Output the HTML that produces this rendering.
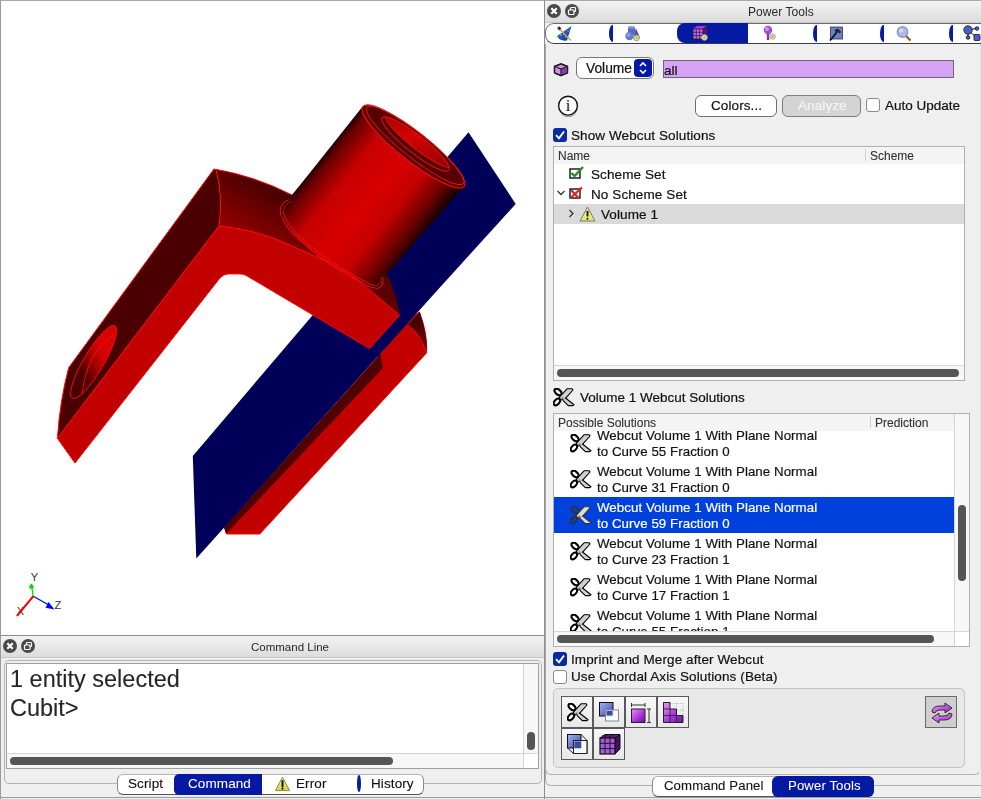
<!DOCTYPE html>
<html><head><meta charset="utf-8">
<style>
*{box-sizing:border-box;margin:0;padding:0}
html,body{width:981px;height:799px;overflow:hidden;background:#efefef;font-family:"Liberation Sans",sans-serif;color:#111}
.a{position:absolute}
.t{position:absolute;white-space:nowrap;font-size:13.5px;letter-spacing:0.1px;line-height:16px;-webkit-text-stroke:0.2px currentColor;will-change:transform}
.titlebar{position:absolute;background:linear-gradient(#f3f3f3,#dcdcdc);border-bottom:1px solid #c6c6c6}
.btnc{position:absolute;width:14px;height:14px;border-radius:50%;background:#4a4a4a}
.chk{position:absolute;width:14px;height:14px;border-radius:3px;background:#0a2ba0;}
.chk svg{position:absolute;left:0;top:0}
.unchk{position:absolute;width:14px;height:14px;border-radius:3px;background:#fff;border:1px solid #8a8a8a}
.tool{position:absolute;width:32px;height:32px;border:1px solid #5a5a5a;background:linear-gradient(#f7f7f7,#e8e8e8)}
.sep{position:absolute;width:3.6px;height:17px;background:#0a1c9c;border-radius:100% 0 0 100% / 50% 0 0 50%}
</style></head><body>

<!-- ============ VIEWPORT ============ -->
<div class="a" style="left:0;top:0;width:545px;height:636px;background:#fff;border-top:1px solid #a8a8a8;border-left:1px solid #9a9a9a;border-bottom:1px solid #8e8e8e"></div>
<svg class="a" style="left:0;top:0" width="545" height="636" viewBox="0 0 545 636" id="model">
<defs>
 <linearGradient id="cyl" gradientUnits="userSpaceOnUse" x1="362" y1="104.7" x2="464" y2="185.3">
  <stop offset="0" stop-color="#1a0000"/>
  <stop offset="0.07" stop-color="#6a0000"/>
  <stop offset="0.25" stop-color="#c60000"/>
  <stop offset="0.5" stop-color="#d80000"/>
  <stop offset="0.7" stop-color="#c40000"/>
  <stop offset="0.88" stop-color="#6a0000"/>
  <stop offset="1" stop-color="#0e0000"/>
 </linearGradient>
 <linearGradient id="corner" gradientUnits="userSpaceOnUse" x1="262" y1="176" x2="232" y2="226">
  <stop offset="0" stop-color="#420000"/>
  <stop offset="1" stop-color="#8e0000"/>
 </linearGradient>
 <linearGradient id="hole" gradientUnits="userSpaceOnUse" x1="385" y1="118" x2="445" y2="168">
  <stop offset="0" stop-color="#9a0000"/>
  <stop offset="0.45" stop-color="#d40000"/>
  <stop offset="1" stop-color="#900000"/>
 </linearGradient>
 <linearGradient id="rcorner" gradientUnits="userSpaceOnUse" x1="408" y1="320" x2="426" y2="350">
  <stop offset="0" stop-color="#3a0000"/>
  <stop offset="1" stop-color="#7a0000"/>
 </linearGradient>
</defs>
<!-- right arm (behind plane) -->
<path d="M419.5,312 Q428,335 426.5,353 L259.8,534 L226.8,534 L224.5,528 L377,358 L405,322 Z" fill="#c30000" stroke="#ff0000" stroke-width="1"/>
<path d="M419.5,312 Q428,335 426.5,353 Q420,333 408,325 Z" fill="url(#rcorner)"/>
<path d="M408,325 Q420,333 426.5,353" fill="none" stroke="#ff1010" stroke-width="0.8"/>
<path d="M377,358 L380,352 L383,368 L226,534 L224,527 Z" fill="#500000"/>
<!-- blue plane -->
<path d="M468.5,132.3 L515.7,204 L436.7,290.9 L196.3,558.6 L192.8,455.9 Z" fill="#000058"/>
<!-- left body: corner / base top face -->
<path d="M214,169 Q255,176 292,195 L330,150 L400,200 L387,274.4 Q396,292 399.6,315.2 L351,274.5 L317,257 L278,240 Q250,229 219,226 Q223,195 216,170 Z" fill="url(#corner)"/>
<path d="M387,274.4 Q396,292 399.6,315.2 L372,290 Z" fill="#5a0000"/>
<!-- left arm dark face -->
<path d="M214,169 L68.7,367.7 Q60,400 57.4,438.3 L219,226 Q223,195 216,170 Z" fill="#4b0000"/>
<!-- hole on arm -->
<linearGradient id="armhole" gradientUnits="userSpaceOnUse" x1="80" y1="355" x2="105" y2="370">
  <stop offset="0" stop-color="#4a0000"/><stop offset="0.6" stop-color="#b00000"/><stop offset="1" stop-color="#d80000"/>
</linearGradient>
<ellipse cx="93.6" cy="362" rx="42" ry="10" transform="rotate(-59.5 93.6 362)" fill="url(#armhole)" stroke="#ff1010" stroke-width="0.8"/>
<path d="M82,394 Q87,352 113.5,335" fill="none" stroke="#ff1010" stroke-width="0.8"/>
<!-- cylinder body -->
<path d="M363,106 L289,199 C276,210 280,225 296,237 C310,250 330,266 341.6,271.3 C355,279 370,288 378,288.5 L387,274.4 L464,186.5 Z" fill="url(#cyl)"/>
<!-- cylinder top -->
<ellipse cx="413.5" cy="146.5" rx="64.5" ry="14.5" transform="rotate(38.3 413.5 146.5)" fill="#560000" stroke="#ff1010" stroke-width="1"/>
<ellipse cx="415.2" cy="145.4" rx="61.5" ry="12.5" transform="rotate(38.3 415.2 145.4)" fill="none" stroke="#ff1010" stroke-width="0.8"/>
<clipPath id="holeclip"><ellipse cx="415.5" cy="144" rx="42.5" ry="9" transform="rotate(38.3 415.5 144)"/></clipPath>
<ellipse cx="415.5" cy="144" rx="42.5" ry="9" transform="rotate(38.3 415.5 144)" fill="#520000"/>
<g clip-path="url(#holeclip)"><ellipse cx="418.5" cy="140.2" rx="42.5" ry="9" transform="rotate(38.3 418.5 140.2)" fill="url(#hole)" stroke="#ff1010" stroke-width="0.8"/></g>
<ellipse cx="415.5" cy="144" rx="42.5" ry="9" transform="rotate(38.3 415.5 144)" fill="none" stroke="#ff1010" stroke-width="0.9"/>
<!-- U bright face -->
<path d="M75,463 L57.4,438.3 L219,226 Q250,229 278,240 L317,257 L351,274.5 L399.6,315.2 L369.5,348.5 L246.4,275.6 Q244,273.9 240,273.9 L228,273.9 Q223.5,274 219.5,278.5 Z" fill="#c30000" stroke="#ff0000" stroke-width="1" stroke-linejoin="round"/>
<!-- base ring -->
<path d="M289.3,199.6 C280,203 278,212 282.4,217.5 C286,226 290,231 296.2,236.8 L318.2,256.1 L341.6,271.3 L363.7,283.7 Q372,288 377.4,288.5 Q384,287 383,276.8" fill="none" stroke="#ff1010" stroke-width="0.9"/>
<path d="M291.5,201 C283.5,205 282,212 285,217 C289,225 293,230 298,235 L320,254 L343,269 L364,281 Q371,285.5 377,286 Q381.5,284 381.5,277.5" fill="none" stroke="#ff1010" stroke-width="0.8"/>
<!-- outer silhouette edges -->
<path d="M57.4,438.3 Q60,400 68.7,367.7 L214,169 Q255,176 292,195" fill="none" stroke="#ff0000" stroke-width="1"/>
<path d="M219,226 Q223,195 216,170" fill="none" stroke="#ff1010" stroke-width="0.8"/>
</svg>


<!-- axis triad -->
<svg class="a" style="left:0;top:560px" width="80" height="70" viewBox="0 560 80 70">
 <path d="M33.2,596.3 L31.8,587" stroke="#00dd00" stroke-width="1.3"/>
 <path d="M31.2,583.5 Q28.5,586.5 29.5,588.5 L33.5,588.5 Q34.5,586 31.2,583.5 Z" fill="#00dd00"/>
 <path d="M33.2,596.3 L48,604.5" stroke="#0000ff" stroke-width="1.3"/>
 <path d="M54.5,609.5 L45.5,607.8 L48.5,602 Z" fill="#0000ff"/>
 <path d="M33.2,596.3 L17,615.8" stroke="#ff0000" stroke-width="1.8"/>
 <text x="30.8" y="581" font-family="Liberation Sans" font-size="11" fill="#333">Y</text>
 <text x="54.5" y="608.8" font-family="Liberation Sans" font-size="11" fill="#333">Z</text>
 <text x="16.8" y="615" font-family="Liberation Sans" font-size="11" fill="#333">X</text>
 <path d="M33.2,596.3 L17,615.8" stroke="#ff0000" stroke-width="1.6" opacity="0.85"/>
</svg>

<!-- ============ COMMAND LINE DOCK ============ -->
<div class="titlebar" style="left:1px;top:636px;width:543px;height:22px"></div>
<div class="btnc" style="left:3px;top:639px"><svg width="14" height="14" style="position:absolute;left:0;top:0"><path d="M4.3 4.3 L9.7 9.7 M9.7 4.3 L4.3 9.7" stroke="#fff" stroke-width="2.2"/></svg></div>
<div class="btnc" style="left:21px;top:639px"><svg width="14" height="14" style="position:absolute;left:0;top:0"><rect x="5.5" y="3.5" width="5" height="4" rx="0.8" fill="none" stroke="#fff" stroke-width="1.2"/><rect x="3.5" y="6" width="5.5" height="4.5" rx="0.8" fill="#4a4a4a" stroke="#fff" stroke-width="1.2"/></svg></div>
<div class="t" style="left:251px;top:638.6px;font-size:11.5px;letter-spacing:0;-webkit-text-stroke:0;color:#2a2a2a">Command Line</div>
<div class="a" style="left:0;top:636px;width:1px;height:163px;background:#9a9a9a"></div>
<!-- frame -->
<div class="a" style="left:4px;top:660px;width:538px;height:124px;border:1px solid #b4b4b4;border-radius:5px;background:#efefef"></div>
<div class="a" style="left:6px;top:663px;width:533px;height:106px;border:1px solid #a0a0a0;background:#fff"></div>
<div class="t" style="left:9.6px;top:665px;font-size:23.5px;line-height:29px;letter-spacing:0;color:#262626;-webkit-text-stroke:0.1px #262626">1 entity selected<br>Cubit&gt;</div>
<!-- scroll areas -->
<div class="a" style="left:523px;top:664px;width:15px;height:90px;background:#f7f7f7;border-left:1px solid #d6d6d6"></div>
<div class="a" style="left:527px;top:732px;width:8px;height:18px;border-radius:4px;background:#555"></div>
<div class="a" style="left:7px;top:753px;width:531px;height:15px;background:#f7f7f7;border-top:1px solid #d6d6d6"></div>
<div class="a" style="left:523px;top:754px;width:15px;height:14px;background:#fff;border-left:1px solid #d6d6d6"></div>
<div class="a" style="left:10px;top:757px;width:383px;height:8px;border-radius:4px;background:#555"></div>
<!-- bottom tabs -->
<div class="a" style="left:1px;top:797px;width:544px;height:1px;background:#9a9a9a"></div>
<div class="a" style="left:117px;top:774px;width:307px;height:21px;border:1px solid #8a8a8a;border-top-color:#b4b4b4;border-bottom-color:#555;border-radius:6px;background:#fff"></div>
<div class="a" style="left:174px;top:774px;width:88px;height:21px;background:#0519a2;border-radius:5px 0 0 5px"></div>
<div class="t" style="left:128px;top:776px;-webkit-text-stroke:0.12px currentColor">Script</div>
<div class="t" style="left:188px;top:776px;color:#fff;-webkit-text-stroke:0.05px currentColor">Command</div>
<svg class="a" style="left:274px;top:776px" width="17" height="16" viewBox="0 0 17 16">
 <defs><linearGradient id="wy" x1="0" y1="0" x2="0" y2="1"><stop offset="0" stop-color="#fbfb90"/><stop offset="1" stop-color="#d8d040"/></linearGradient></defs>
 <path d="M8.5 1.2 L15.6 14.6 L1.4 14.6 Z" fill="url(#wy)" stroke="#8a8a40" stroke-width="1" stroke-linejoin="round"/>
 <path d="M8.5 5 L8.5 10.3" stroke="#111" stroke-width="2" stroke-linecap="round"/><circle cx="8.5" cy="12.6" r="1.1" fill="#111"/>
</svg>
<div class="t" style="left:296px;top:776px;-webkit-text-stroke:0.12px currentColor">Error</div>
<div class="sep" style="left:357px;top:775px;border-radius:50%"></div>
<div class="t" style="left:371px;top:776px;-webkit-text-stroke:0.12px currentColor">History</div>

<!-- divider -->
<div class="a" style="left:544px;top:0;width:1px;height:799px;background:#8e8e8e"></div>

<!-- ============ POWER TOOLS DOCK ============ -->
<div class="a" style="left:545px;top:0;width:436px;height:1px;background:#a8a8a8"></div>
<div class="titlebar" style="left:545px;top:1px;width:436px;height:22px"></div>
<div class="btnc" style="left:547px;top:4px"><svg width="14" height="14" style="position:absolute;left:0;top:0"><path d="M4.3 4.3 L9.7 9.7 M9.7 4.3 L4.3 9.7" stroke="#fff" stroke-width="2.2"/></svg></div>
<div class="btnc" style="left:565px;top:4px"><svg width="14" height="14" style="position:absolute;left:0;top:0"><rect x="5.5" y="3.5" width="5" height="4" rx="0.8" fill="none" stroke="#fff" stroke-width="1.2"/><rect x="3.5" y="6" width="5.5" height="4.5" rx="0.8" fill="#4a4a4a" stroke="#fff" stroke-width="1.2"/></svg></div>
<div class="t" style="left:748px;top:4px;font-size:12px;letter-spacing:0.05px;-webkit-text-stroke:0;color:#2a2a2a">Power Tools</div>
<!-- tab bar -->
<div class="a" style="left:545px;top:23px;width:445px;height:21px;border:1px solid #6e6e6e;border-bottom-color:#3c3c3c;border-radius:9px 0 0 9px;background:#fff"></div>
<div class="a" style="left:677px;top:23px;width:71px;height:20px;background:#0519a2;border-radius:8px 0 0 8px"></div>
<div class="sep" style="left:609px;top:25px"></div>
<div class="sep" style="left:813px;top:25px"></div>
<div class="sep" style="left:880px;top:25px"></div>
<div class="sep" style="left:949px;top:25px"></div>



<!-- tab icons -->
<svg class="a" style="left:556px;top:25px" width="17" height="17" viewBox="0 0 17 17">
 <defs><linearGradient id="hat" x1="0" y1="0" x2="1" y2="1"><stop offset="0" stop-color="#3a8ae8"/><stop offset="1" stop-color="#0a2a90"/></linearGradient></defs>
 <path d="M15.5 1 L1 11 Q3.5 16.5 11 15.5 Z" fill="url(#hat)"/>
 <circle cx="5" cy="10" r="0.7" fill="#f0e040"/><circle cx="8" cy="9" r="0.7" fill="#f0e040"/><circle cx="10" cy="12" r="0.7" fill="#f0e040"/><circle cx="12" cy="6" r="0.6" fill="#f0e040"/>
 <path d="M2 2.5 L15 15.5" stroke="#c8a060" stroke-width="1.5"/>
 <path d="M1 1 L4 2 L2.5 4 Z" fill="#e8c860"/>
 <rect x="1.8" y="1.8" width="3" height="3" fill="#3a3020" transform="rotate(45 3.3 3.3)"/>
</svg>
<svg class="a" style="left:624px;top:25px" width="17" height="17" viewBox="0 0 17 17">
 <path d="M12 3 L16 13 L9 13 Z" fill="#4a58b0"/>
 <rect x="4" y="2" width="7" height="8" fill="#5a68c0"/><ellipse cx="7.5" cy="2.2" rx="3.5" ry="1.3" fill="#8a98e0"/>
 <circle cx="5.5" cy="11" r="4.2" fill="#6a78cc"/><circle cx="4.5" cy="10" r="2" fill="#9aa8ea" opacity="0.7"/>
 <circle cx="12.5" cy="13" r="2.8" fill="#e8e080" stroke="#999" stroke-width="1"/><circle cx="12.5" cy="13" r="1" fill="#aaa"/>
</svg>
<svg class="a" style="left:691px;top:25px" width="18" height="16" viewBox="0 0 18 16">
 <path d="M2 4 L6 1 L16 1 L12 4 Z" fill="#c030d0"/>
 <path d="M12 4 L16 1 L16 11 L12 14 Z" fill="#5a1070"/>
 <rect x="2" y="4" width="10" height="10" fill="#b070e0"/>
 <path d="M2 7.3 H12 M2 10.6 H12 M5.3 4 V14 M8.6 4 V14" stroke="#4a1060" stroke-width="0.8"/>
 <path d="M2 4 H12 V14 H2 Z M12 4 L16 1" fill="none" stroke="#222" stroke-width="0.8"/>
 <circle cx="13.5" cy="12.5" r="2.8" fill="#e8e080" stroke="#aaa" stroke-width="1"/><circle cx="13.5" cy="12.5" r="1" fill="#999"/>
</svg>
<svg class="a" style="left:762px;top:25px" width="15" height="16" viewBox="0 0 15 16">
 <circle cx="6" cy="5" r="4.3" fill="#a050d0"/><circle cx="5" cy="4" r="2" fill="#d8a8f0" opacity="0.8"/>
 <rect x="4.8" y="8" width="2.4" height="7" fill="#8a30c0"/>
 <circle cx="10.5" cy="11.5" r="2.8" fill="#e8e080" stroke="#aaa" stroke-width="1"/><circle cx="10.5" cy="11.5" r="1" fill="#999"/>
</svg>
<svg class="a" style="left:828px;top:26px" width="16" height="16" viewBox="0 0 16 16">
 <rect x="2.5" y="1" width="12" height="12" fill="#6a80c8" stroke="#333" stroke-width="0.8"/>
 <path d="M2 14.5 L9 6" stroke="#111" stroke-width="1.8"/>
 <path d="M6.5 4 L10 2.5 L13 6 L11.5 7.5 L9.5 5.5 L8 6.5 Z" fill="#222"/>
</svg>
<svg class="a" style="left:895px;top:25px" width="17" height="17" viewBox="0 0 17 17">
 <path d="M11 11 L15.5 15.5" stroke="#8a5a20" stroke-width="2.2"/>
 <circle cx="7.5" cy="7" r="5.3" fill="#b0b8ea" stroke="#8890b0" stroke-width="1.2"/>
 <circle cx="6.2" cy="5.5" r="2" fill="#e0e4ff" opacity="0.8"/>
</svg>
<svg class="a" style="left:962px;top:24px" width="19" height="18" viewBox="0 0 19 18">
 <path d="M6 6 L14 4.5 M6 6 L14 13 M6 6 L6 13" stroke="#111" stroke-width="1"/>
 <circle cx="6" cy="6" r="4.2" fill="#4a60c8" stroke="#111" stroke-width="0.8"/>
 <circle cx="15" cy="4.5" r="1.8" fill="#4a60c8" stroke="#111" stroke-width="0.8"/>
 <circle cx="6" cy="13.5" r="1.8" fill="#4a60c8" stroke="#111" stroke-width="0.8"/>
 <rect x="12" y="10.5" width="6" height="6" rx="1" fill="#4a60c8" stroke="#111" stroke-width="0.8"/>
</svg>

<!-- volume row -->
<svg class="a" style="left:553px;top:62px" width="16" height="15" viewBox="0 0 16 15">
 <path d="M8 1.8 L14.5 4.3 L14.5 10.8 L8 13.6 L1.5 10.8 L1.5 4.3 Z" fill="#d090f0" stroke="#222" stroke-width="1.3" stroke-linejoin="round"/>
 <path d="M8 7 L14.5 4.3 L14.5 10.8 L8 13.6 Z" fill="#8a40b8"/>
 <path d="M1.5 4.3 L8 7 L14.5 4.3 M8 7 L8 13.6" fill="none" stroke="#222" stroke-width="1.2"/>
 <path d="M8 1.8 L14.5 4.3 L14.5 10.8 L8 13.6 L1.5 10.8 L1.5 4.3 Z" fill="none" stroke="#222" stroke-width="1.3" stroke-linejoin="round"/>
</svg>
<div class="a" style="left:576px;top:57px;width:78px;height:22px;border:1px solid #777;border-radius:6px;background:#fff"></div>
<div class="t" style="left:585.5px;top:61px;font-size:13.8px;letter-spacing:0">Volume</div>
<div class="a" style="left:634px;top:59px;width:18px;height:18px;border-radius:4px;background:#0519a2"></div>
<svg class="a" style="left:634px;top:59px" width="18" height="18"><path d="M6 7 L9 4 L12 7 M6 11 L9 14 L12 11" fill="none" stroke="#fff" stroke-width="1.6"/></svg>
<div class="a" style="left:663px;top:60px;width:291px;height:18px;border:1px solid #6a6a6a;background:#d6a2f6"></div>
<div class="t" style="left:663.5px;top:62.5px;font-size:13.5px;letter-spacing:0;color:#111">all</div>

<!-- info + buttons -->
<svg class="a" style="left:555px;top:93px" width="26" height="26" viewBox="0 0 26 26">
 <ellipse cx="13.3" cy="14.8" rx="9.3" ry="9.3" fill="#9a9a9a"/>
 <ellipse cx="13.3" cy="14.3" rx="8.6" ry="8.6" fill="#efefef"/>
 <circle cx="13" cy="12.7" r="9.4" fill="#fff" stroke="#111" stroke-width="1.4"/>
 <text x="13" y="18.2" text-anchor="middle" font-family="Liberation Serif" font-size="16.5" fill="#111">i</text>
</svg>
<div class="a" style="left:695px;top:95px;width:82px;height:22px;border:1px solid #6e6e6e;border-radius:6px;background:#fff"></div>
<div class="t" style="left:711px;top:98px">Colors...</div>
<div class="a" style="left:782px;top:95px;width:79px;height:22px;border:1px solid #7e7e7e;border-radius:6px;background:#d4d4d4"></div>
<div class="t" style="left:798px;top:98px;color:#f4f4f4">Analyze</div>
<div class="unchk" style="left:866px;top:98px;width:14px;height:14px"></div>
<div class="t" style="left:884.5px;top:98px;letter-spacing:0">Auto Update</div>

<div class="chk" style="left:553px;top:128px"><svg width="14" height="14"><path d="M3 7.2 L6 10.3 L11 3.5" fill="none" stroke="#fff" stroke-width="1.9"/></svg></div>
<div class="t" style="left:571px;top:128px;letter-spacing:0.1px">Show Webcut Solutions</div>

<!-- scheme tree -->
<div class="a" style="left:553px;top:146px;width:412px;height:235px;border:1px solid #b0b0b0;background:#fff"></div>
<div class="a" style="left:554px;top:147px;width:410px;height:17px;background:#f4f4f4"></div>
<div class="a" style="left:865px;top:149px;width:1px;height:12px;background:#cfcfcf"></div>
<div class="t" style="left:558px;top:148px;font-size:12px;letter-spacing:0;color:#333;-webkit-text-stroke:0.12px #333">Name</div>
<div class="t" style="left:870px;top:148px;font-size:12px;letter-spacing:0;color:#333;-webkit-text-stroke:0.12px #333">Scheme</div>
<div class="a" style="left:554px;top:204px;width:410px;height:20px;background:#dadada"></div>
<div class="t" style="left:591px;top:167px">Scheme Set</div>
<div class="t" style="left:591px;top:187px">No Scheme Set</div>
<div class="t" style="left:601px;top:207px">Volume 1</div>
<svg class="a" style="left:569px;top:166px" width="16" height="14" viewBox="0 0 16 14">
 <rect x="1" y="3" width="10" height="9" fill="#fff" stroke="#111" stroke-width="1.4"/>
 <path d="M2.5 7 L5.5 10 L14 1" fill="none" stroke="#2a8a2a" stroke-width="2.4"/>
</svg>
<svg class="a" style="left:569px;top:186px" width="16" height="14" viewBox="0 0 16 14">
 <rect x="1" y="3" width="10" height="9" fill="#fff" stroke="#111" stroke-width="1.4"/>
 <path d="M1.5 12 L13 1.5 M2 4 L10 12.5" fill="none" stroke="#e02020" stroke-width="2.2"/>
</svg>
<svg class="a" style="left:556px;top:188px" width="10" height="10"><path d="M1.5 3 L5 6.5 L8.5 3" fill="none" stroke="#333" stroke-width="1.3"/></svg>
<svg class="a" style="left:567px;top:208px" width="10" height="12"><path d="M2.5 2 L6 5.5 L2.5 9" fill="none" stroke="#333" stroke-width="1.3"/></svg>
<svg class="a" style="left:579px;top:206px" width="17" height="16" viewBox="0 0 17 16">
 <path d="M8.5 1 L16 15 L1 15 Z" fill="#e8e87a" stroke="#777" stroke-width="1"/>
 <path d="M8.5 5 V10.5" stroke="#111" stroke-width="1.8"/><circle cx="8.5" cy="12.8" r="1" fill="#111"/>
</svg>
<div class="a" style="left:554px;top:365px;width:410px;height:15px;background:#f7f7f7;border-top:1px solid #d6d6d6"></div>
<div class="a" style="left:557px;top:369px;width:402px;height:8px;border-radius:4px;background:#555"></div>

<!-- Volume 1 webcut solutions -->
<svg class="a" style="left:553px;top:387.5px" width="22" height="19" viewBox="0 0 22 19"><ellipse cx="5" cy="4" rx="4.1" ry="2.5" transform="rotate(40 5 4)" fill="#efefef" stroke="#000" stroke-width="2.1"/><ellipse cx="3.9" cy="14" rx="3.9" ry="2.4" transform="rotate(-48 3.9 14)" fill="#efefef" stroke="#000" stroke-width="2.1"/><path d="M8 6.8 L11 9.8 M6.8 11.3 L9 9.6" stroke="#000" stroke-width="2"/><path d="M6.2 9.4 L14 0.8 L19.3 0.8 L20 2 L11.4 11.7 L7.7 11.7 Z" fill="#d0d0d0" stroke="#000" stroke-width="1.1" stroke-linejoin="round"/><path d="M12.2 9.8 L21 16.7 L19.8 17.6 L15.3 17.6 L9.9 12.4" fill="#d0d0d0" stroke="#000" stroke-width="1.1" stroke-linejoin="round"/><circle cx="9.4" cy="10.2" r="0.9" fill="#777"/></svg>
<div class="t" style="left:580px;top:389.5px;letter-spacing:0">Volume 1 Webcut Solutions</div>

<!-- solutions table -->
<div class="a" style="left:553px;top:413px;width:417px;height:234px;border:1px solid #b0b0b0;background:#fff"></div>
<div id="rows" class="a" style="left:554px;top:425px;width:400px;height:206px;overflow:hidden"><svg class="a" style="left:16px;top:9px" width="22" height="19" viewBox="0 0 22 19"><ellipse cx="5" cy="4" rx="4.1" ry="2.5" transform="rotate(40 5 4)" fill="#fff" stroke="#000" stroke-width="2.1"/><ellipse cx="3.9" cy="14" rx="3.9" ry="2.4" transform="rotate(-48 3.9 14)" fill="#fff" stroke="#000" stroke-width="2.1"/><path d="M8 6.8 L11 9.8 M6.8 11.3 L9 9.6" stroke="#000" stroke-width="2"/><path d="M6.2 9.4 L14 0.8 L19.3 0.8 L20 2 L11.4 11.7 L7.7 11.7 Z" fill="#d0d0d0" stroke="#000" stroke-width="1.1" stroke-linejoin="round"/><path d="M12.2 9.8 L21 16.7 L19.8 17.6 L15.3 17.6 L9.9 12.4" fill="#d0d0d0" stroke="#000" stroke-width="1.1" stroke-linejoin="round"/><circle cx="9.4" cy="10.2" r="0.9" fill="#777"/></svg>
<div class="t" style="left:43px;top:3px;color:#111;line-height:16px;font-size:13.3px;letter-spacing:0.05px">Webcut Volume 1 With Plane Normal<br>to Curve 55 Fraction 0</div>
<svg class="a" style="left:16px;top:45px" width="22" height="19" viewBox="0 0 22 19"><ellipse cx="5" cy="4" rx="4.1" ry="2.5" transform="rotate(40 5 4)" fill="#fff" stroke="#000" stroke-width="2.1"/><ellipse cx="3.9" cy="14" rx="3.9" ry="2.4" transform="rotate(-48 3.9 14)" fill="#fff" stroke="#000" stroke-width="2.1"/><path d="M8 6.8 L11 9.8 M6.8 11.3 L9 9.6" stroke="#000" stroke-width="2"/><path d="M6.2 9.4 L14 0.8 L19.3 0.8 L20 2 L11.4 11.7 L7.7 11.7 Z" fill="#d0d0d0" stroke="#000" stroke-width="1.1" stroke-linejoin="round"/><path d="M12.2 9.8 L21 16.7 L19.8 17.6 L15.3 17.6 L9.9 12.4" fill="#d0d0d0" stroke="#000" stroke-width="1.1" stroke-linejoin="round"/><circle cx="9.4" cy="10.2" r="0.9" fill="#777"/></svg>
<div class="t" style="left:43px;top:39px;color:#111;line-height:16px;font-size:13.3px;letter-spacing:0.05px">Webcut Volume 1 With Plane Normal<br>to Curve 31 Fraction 0</div>
<div class="a" style="left:0;top:72px;width:400px;height:36px;background:#0040dc"></div>
<svg class="a" style="left:16px;top:81px" width="22" height="19" viewBox="0 0 22 19"><ellipse cx="5" cy="4" rx="4.1" ry="2.5" transform="rotate(40 5 4)" fill="none" stroke="#333" stroke-width="2.1"/><ellipse cx="3.9" cy="14" rx="3.9" ry="2.4" transform="rotate(-48 3.9 14)" fill="none" stroke="#333" stroke-width="2.1"/><path d="M8 6.8 L11 9.8 M6.8 11.3 L9 9.6" stroke="#333" stroke-width="2"/><path d="M6.2 9.4 L14 0.8 L19.3 0.8 L20 2 L11.4 11.7 L7.7 11.7 Z" fill="#dcdce0" stroke="#333" stroke-width="1.1" stroke-linejoin="round"/><path d="M12.2 9.8 L21 16.7 L19.8 17.6 L15.3 17.6 L9.9 12.4" fill="#dcdce0" stroke="#333" stroke-width="1.1" stroke-linejoin="round"/><circle cx="9.4" cy="10.2" r="0.9" fill="#777"/></svg>
<div class="t" style="left:43px;top:75px;color:#fff;line-height:16px;font-size:13.3px;letter-spacing:0.05px">Webcut Volume 1 With Plane Normal<br>to Curve 59 Fraction 0</div>
<svg class="a" style="left:16px;top:117px" width="22" height="19" viewBox="0 0 22 19"><ellipse cx="5" cy="4" rx="4.1" ry="2.5" transform="rotate(40 5 4)" fill="#fff" stroke="#000" stroke-width="2.1"/><ellipse cx="3.9" cy="14" rx="3.9" ry="2.4" transform="rotate(-48 3.9 14)" fill="#fff" stroke="#000" stroke-width="2.1"/><path d="M8 6.8 L11 9.8 M6.8 11.3 L9 9.6" stroke="#000" stroke-width="2"/><path d="M6.2 9.4 L14 0.8 L19.3 0.8 L20 2 L11.4 11.7 L7.7 11.7 Z" fill="#d0d0d0" stroke="#000" stroke-width="1.1" stroke-linejoin="round"/><path d="M12.2 9.8 L21 16.7 L19.8 17.6 L15.3 17.6 L9.9 12.4" fill="#d0d0d0" stroke="#000" stroke-width="1.1" stroke-linejoin="round"/><circle cx="9.4" cy="10.2" r="0.9" fill="#777"/></svg>
<div class="t" style="left:43px;top:111px;color:#111;line-height:16px;font-size:13.3px;letter-spacing:0.05px">Webcut Volume 1 With Plane Normal<br>to Curve 23 Fraction 1</div>
<svg class="a" style="left:16px;top:153px" width="22" height="19" viewBox="0 0 22 19"><ellipse cx="5" cy="4" rx="4.1" ry="2.5" transform="rotate(40 5 4)" fill="#fff" stroke="#000" stroke-width="2.1"/><ellipse cx="3.9" cy="14" rx="3.9" ry="2.4" transform="rotate(-48 3.9 14)" fill="#fff" stroke="#000" stroke-width="2.1"/><path d="M8 6.8 L11 9.8 M6.8 11.3 L9 9.6" stroke="#000" stroke-width="2"/><path d="M6.2 9.4 L14 0.8 L19.3 0.8 L20 2 L11.4 11.7 L7.7 11.7 Z" fill="#d0d0d0" stroke="#000" stroke-width="1.1" stroke-linejoin="round"/><path d="M12.2 9.8 L21 16.7 L19.8 17.6 L15.3 17.6 L9.9 12.4" fill="#d0d0d0" stroke="#000" stroke-width="1.1" stroke-linejoin="round"/><circle cx="9.4" cy="10.2" r="0.9" fill="#777"/></svg>
<div class="t" style="left:43px;top:147px;color:#111;line-height:16px;font-size:13.3px;letter-spacing:0.05px">Webcut Volume 1 With Plane Normal<br>to Curve 17 Fraction 1</div>
<svg class="a" style="left:16px;top:189px" width="22" height="19" viewBox="0 0 22 19"><ellipse cx="5" cy="4" rx="4.1" ry="2.5" transform="rotate(40 5 4)" fill="#fff" stroke="#000" stroke-width="2.1"/><ellipse cx="3.9" cy="14" rx="3.9" ry="2.4" transform="rotate(-48 3.9 14)" fill="#fff" stroke="#000" stroke-width="2.1"/><path d="M8 6.8 L11 9.8 M6.8 11.3 L9 9.6" stroke="#000" stroke-width="2"/><path d="M6.2 9.4 L14 0.8 L19.3 0.8 L20 2 L11.4 11.7 L7.7 11.7 Z" fill="#d0d0d0" stroke="#000" stroke-width="1.1" stroke-linejoin="round"/><path d="M12.2 9.8 L21 16.7 L19.8 17.6 L15.3 17.6 L9.9 12.4" fill="#d0d0d0" stroke="#000" stroke-width="1.1" stroke-linejoin="round"/><circle cx="9.4" cy="10.2" r="0.9" fill="#777"/></svg>
<div class="t" style="left:43px;top:183px;color:#111;line-height:16px;font-size:13.3px;letter-spacing:0.05px">Webcut Volume 1 With Plane Normal<br>to Curve 55 Fraction 1</div></div>
<div class="a" style="left:554px;top:414px;width:400px;height:17px;background:#f4f4f4"></div>
<div class="a" style="left:870px;top:416px;width:1px;height:12px;background:#cfcfcf"></div>
<div class="t" style="left:558px;top:415px;font-size:12px;letter-spacing:0;color:#333;-webkit-text-stroke:0.12px #333">Possible Solutions</div>
<div class="t" style="left:875px;top:415px;font-size:12px;letter-spacing:0;color:#333;-webkit-text-stroke:0.12px #333">Prediction</div>
<div class="a" style="left:954px;top:414px;width:15px;height:217px;background:#f7f7f7;border-left:1px solid #d6d6d6"></div>
<div class="a" style="left:958px;top:505px;width:8px;height:76px;border-radius:4px;background:#555"></div>
<div class="a" style="left:554px;top:631px;width:400px;height:15px;background:#f7f7f7;border-top:1px solid #d6d6d6"></div>
<div class="a" style="left:954px;top:631px;width:15px;height:15px;background:#fff;border-left:1px solid #d6d6d6;border-top:1px solid #d6d6d6"></div>
<div class="a" style="left:557px;top:635px;width:377px;height:8px;border-radius:4px;background:#555"></div>

<!-- checkboxes -->
<div class="chk" style="left:553px;top:652px"><svg width="14" height="14"><path d="M3 7.2 L6 10.3 L11 3.5" fill="none" stroke="#fff" stroke-width="1.9"/></svg></div>
<div class="t" style="left:570.5px;top:652px;letter-spacing:0.1px">Imprint and Merge after Webcut</div>
<div class="unchk" style="left:553px;top:670px"></div>
<div class="t" style="left:571px;top:669px;letter-spacing:0.1px">Use Chordal Axis Solutions (Beta)</div>

<!-- group box -->
<div class="a" style="left:553px;top:688px;width:412px;height:80px;border:1px solid #c4c4c4;border-radius:5px;background:#e8e8e8"></div>

<div class="tool" style="left:561px;top:696px"><svg class="a" style="left:5px;top:6px" width="22" height="19" viewBox="0 0 22 19"><ellipse cx="5" cy="4" rx="4.1" ry="2.5" transform="rotate(40 5 4)" fill="#fff" stroke="#000" stroke-width="2.1"/><ellipse cx="3.9" cy="14" rx="3.9" ry="2.4" transform="rotate(-48 3.9 14)" fill="#fff" stroke="#000" stroke-width="2.1"/><path d="M8 6.8 L11 9.8 M6.8 11.3 L9 9.6" stroke="#000" stroke-width="2"/><path d="M6.2 9.4 L14 0.8 L19.3 0.8 L20 2 L11.4 11.7 L7.7 11.7 Z" fill="#d0d0d0" stroke="#000" stroke-width="1.1" stroke-linejoin="round"/><path d="M12.2 9.8 L21 16.7 L19.8 17.6 L15.3 17.6 L9.9 12.4" fill="#d0d0d0" stroke="#000" stroke-width="1.1" stroke-linejoin="round"/><circle cx="9.4" cy="10.2" r="0.9" fill="#777"/></svg></div>
<div class="tool" style="left:593px;top:696px"><svg class="a" style="left:0;top:0" width="32" height="32" viewBox="0 0 32 32">
 <defs><linearGradient id="bsq" x1="0" y1="0" x2="1" y2="1"><stop offset="0" stop-color="#a8b4f0"/><stop offset="1" stop-color="#3a48a8"/></linearGradient>
 <linearGradient id="psq" x1="0" y1="0" x2="1" y2="1"><stop offset="0" stop-color="#e890f8"/><stop offset="0.6" stop-color="#a830d8"/><stop offset="1" stop-color="#601890"/></linearGradient></defs>
 <rect x="5.5" y="5.5" width="13.5" height="13.5" fill="url(#bsq)" stroke="#111" stroke-width="1"/>
 <rect x="11.5" y="13" width="13" height="11" fill="#fff" fill-opacity="0.85" stroke="#888" stroke-width="1"/>
 <rect x="12.5" y="14" width="6" height="4.5" fill="#3a48a8"/>
</svg></div>
<div class="tool" style="left:625px;top:696px"><svg class="a" style="left:0;top:0" width="32" height="32" viewBox="0 0 32 32">
 <rect x="5.5" y="12" width="13.5" height="13.5" fill="url(#psq)" stroke="#222" stroke-width="1"/>
 <path d="M5.5 8 H19 M5.5 6 V10 M19 6 V10 M23 12 V25.5 M21 12 H25 M21 25.5 H25" stroke="#333" stroke-width="1"/>
</svg></div>
<div class="tool" style="left:657px;top:696px"><svg class="a" style="left:0;top:0" width="32" height="32" viewBox="0 0 32 32">
 <path d="M12 6.5 H25 V19 M18.5 6.5 V19 M12 13 H25" stroke="#8aa0c8" stroke-width="0.8" stroke-dasharray="1,1.5" fill="none"/>
 <path d="M5.5 5.5 H12 V12 H18.5 V18.5 H25 V25.5 H5.5 Z" fill="url(#psq)" stroke="#222" stroke-width="1"/>
 <path d="M5.5 12 H12 M5.5 18.5 H18.5 M12 12 V25.5 M18.5 18.5 V25.5" stroke="#222" stroke-width="0.8"/>
</svg></div>
<div class="tool" style="left:561px;top:728px"><svg class="a" style="left:0;top:0" width="32" height="32" viewBox="0 0 32 32">
 <rect x="5.5" y="5.5" width="13.5" height="13.5" fill="url(#bsq)" stroke="#111" stroke-width="1"/>
 <path d="M19 5.5 L25 11.5 V24.5 H11.5 L5.5 19" fill="none" stroke="#222" stroke-width="1"/>
 <rect x="11.5" y="11.5" width="13.5" height="13" fill="#fff" fill-opacity="0.6" stroke="#222" stroke-width="1"/>
 <rect x="12.5" y="12.5" width="6.5" height="6.5" fill="#3a48a8"/>
</svg></div>
<div class="tool" style="left:593px;top:728px"><svg class="a" style="left:0;top:0" width="32" height="32" viewBox="0 0 32 32">
 <path d="M6 9 L11 5.5 L26 5.5 L21 9 Z" fill="#9a30c8" stroke="#111" stroke-width="1"/>
 <path d="M21 9 L26 5.5 L26 20 L21 25 Z" fill="#4a1068" stroke="#111" stroke-width="1"/>
 <rect x="6" y="9" width="15" height="16" fill="#a060d0" stroke="#111" stroke-width="1.2"/>
 <path d="M6 14.3 H21 M6 19.6 H21 M11 9 V25 M16 9 V25 M8 7 H23 M14 5.5 L9 9 M19 5.5 L14 9 M21 14 L26 10 M21 19 L26 15" stroke="#2a0838" stroke-width="1"/>
</svg></div>
<div class="tool" style="left:925px;top:696px;background:#cfcfcf;border-color:#6a6a6a"><svg class="a" style="left:0;top:0" width="32" height="32" viewBox="0 0 32 32">
 <defs><linearGradient id="arr" x1="0" y1="0" x2="1" y2="1"><stop offset="0" stop-color="#f0a0ff"/><stop offset="1" stop-color="#9020c0"/></linearGradient></defs>
 <path d="M6 15 Q6 9 14 9 L19 9 L19 6 L26 11 L19 16 L19 13 L14 13 Q10 13 9 16 Z" fill="url(#arr)" stroke="#222" stroke-width="0.9"/>
 <path d="M26 17 Q26 23 18 23 L13 23 L13 26 L6 21 L13 16 L13 19 L18 19 Q22 19 23 16 Z" fill="url(#arr)" stroke="#222" stroke-width="0.9"/>
</svg></div>

<!-- panel frame -->
<div class="a" style="left:545px;top:44px;width:436px;height:731px;border-right:1px solid #e4e4e4;border-bottom:1px solid #b4b4b4;border-left:1px solid #a8a8a8;border-radius:0 0 6px 6px"></div>
<div class="a" style="left:545px;top:770px;width:436px;height:16px;border-left:1px solid #a8a8a8;border-bottom:1px solid #b0b0b0;border-radius:0 0 0 6px"></div>
<div class="a" style="left:545px;top:797px;width:436px;height:1px;background:#9a9a9a"></div>
<div class="a" style="left:652px;top:776px;width:222px;height:21px;border:1px solid #8a8a8a;border-top-color:#b4b4b4;border-bottom-color:#555;border-radius:6px;background:#fff"></div>
<div class="a" style="left:772px;top:776px;width:102px;height:21px;background:#0519a2;border-radius:6px"></div>
<div class="t" style="left:664px;top:778px;font-size:13.2px;-webkit-text-stroke:0.12px currentColor">Command Panel</div>
<div class="t" style="left:787.5px;top:778px;color:#fff;font-size:13.2px;-webkit-text-stroke:0.05px currentColor">Power Tools</div>

<!-- right border -->


</body></html>
